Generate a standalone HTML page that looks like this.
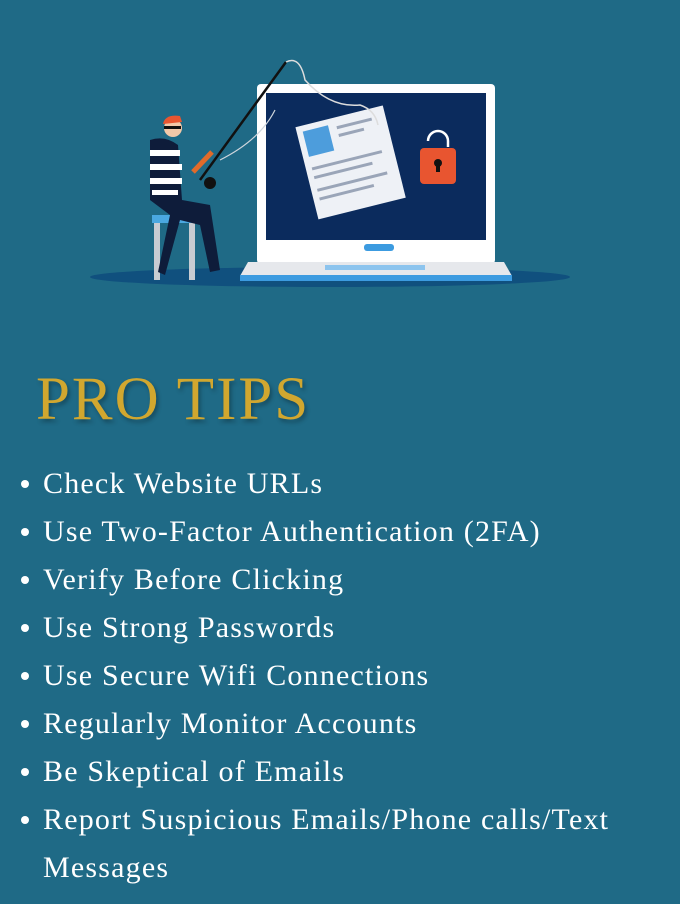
<!DOCTYPE html>
<html><head><meta charset="utf-8"><style>
body{margin:0;width:680px;height:904px;background:#1f6a86;overflow:hidden;position:relative;font-family:"Liberation Serif",serif;}
h1{position:absolute;left:36px;top:365px;margin:0;font-weight:normal;font-size:61px;line-height:70px;color:#d1a72f;letter-spacing:2px;text-shadow:2px 3px 4px rgba(0,0,0,.3);}
ul{position:absolute;left:0;top:460px;margin:0;padding:0 0 0 43px;list-style:none;color:#fff;font-size:30px;line-height:48px;letter-spacing:1.2px;}
li{position:relative}
li:before{content:"";position:absolute;left:-22px;top:20px;width:8px;height:8px;border-radius:50%;background:#fff}
</style></head><body>
<svg width="680" height="320" style="position:absolute;left:0;top:0">
<ellipse cx="330" cy="277" rx="240" ry="10" fill="#10507e"/>
<rect x="257" y="84" width="238" height="180" rx="4" fill="#fff"/>
<rect x="266" y="93" width="220" height="147" fill="#0b2b5d"/>
<rect x="364" y="244" width="30" height="7" rx="3" fill="#3c9be0"/>
<path d="M248 262 H504 L512 276 H240 Z" fill="#e6e8ec"/>
<rect x="240" y="275" width="272" height="6" fill="#3c9be0"/>
<rect x="325" y="265" width="100" height="5" fill="#8cc4ee"/>
<g transform="rotate(-14 350 160)"><rect x="305" y="115" width="90" height="95" fill="#eef1f6"/>
<rect x="311" y="121" width="26" height="26" fill="#4d9ddc"/>
<g fill="#9aa5b8"><rect x="345" y="124" width="36" height="3"/><rect x="345" y="132" width="26" height="3"/><rect x="311" y="158" width="72" height="3"/><rect x="311" y="167" width="60" height="3"/><rect x="311" y="180" width="72" height="3"/><rect x="311" y="189" width="56" height="3"/></g></g>
<path d="M428 141 a10 10 0 0 1 20 0 v6" stroke="#fff" stroke-width="2.5" fill="none"/>
<rect x="420" y="148" width="36" height="36" rx="4" fill="#e85530"/>
<circle cx="438" cy="163" r="4" fill="#111"/><rect x="436" y="164" width="4" height="8" fill="#111"/>
<path d="M200 180 L286 62" stroke="#111" stroke-width="2.5"/>
<path d="M286 62 Q300 55 305 80 Q330 108 360 105 Q375 110 378 125" stroke="#ddd" stroke-width="1.5" fill="none"/>
<path d="M220 160 Q260 140 275 110" stroke="#cfd6dd" stroke-width="1.2" fill="none"/>
<rect x="152" y="215" width="46" height="8" fill="#4aa8e0"/>
<rect x="154" y="223" width="6" height="57" fill="#c8ccd2"/><rect x="189" y="223" width="6" height="57" fill="#c8ccd2"/>
<path d="M150 140 Q165 135 178 145 L182 200 L210 205 L220 270 L210 272 L200 225 L180 220 L165 275 L158 272 L170 215 L150 200 Z" fill="#0e1c3a"/>
<g fill="#fff"><rect x="150" y="150" width="30" height="6"/><rect x="150" y="164" width="32" height="6"/><rect x="150" y="178" width="32" height="6"/><rect x="152" y="190" width="26" height="5"/></g>
<circle cx="173" cy="128" r="9" fill="#f2c8a8"/>
<path d="M163 124 Q165 114 180 116 L182 122 Z" fill="#e85530"/>
<rect x="164" y="126" width="17" height="3" fill="#111"/>
<path d="M193 172 L212 152" stroke="#e06b2a" stroke-width="5"/>
<circle cx="210" cy="183" r="6" fill="#111"/>
</svg>
<h1>PRO TIPS</h1>
<ul>
<li>Check Website URLs</li>
<li>Use Two-Factor Authentication (2FA)</li>
<li>Verify Before Clicking</li>
<li>Use Strong Passwords</li>
<li>Use Secure Wifi Connections</li>
<li>Regularly Monitor Accounts</li>
<li>Be Skeptical of Emails</li>
<li>Report Suspicious Emails/Phone calls/Text Messages</li>
</ul>
</body></html>
